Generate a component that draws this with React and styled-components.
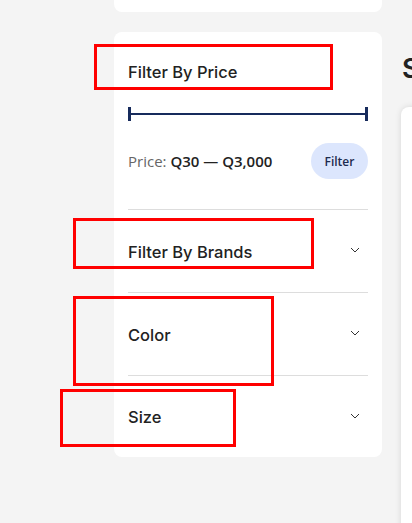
import React from 'react'
import styled, { createGlobalStyle } from 'styled-components';

const GlobalStyle = createGlobalStyle`
    html, body {
        margin: 0;
        padding: 0;
        background: #f4f4f4;
        overflow: hidden;
    }
    body {
        font-family: "Open Sans", "Noto Sans", sans-serif;
    }
`

const Page = styled.div`
    position: relative;
    width: 412px;
    height: 523px;
    overflow: hidden;
    display: grid;
    grid-template-columns: 268px 300px;
    column-gap: 19px;
    padding-left: 114px;
    box-sizing: border-box;
`

const SideColumn = styled.div`
    display: flex;
    flex-direction: column;
    gap: 20px;
`

const TopCard = styled.div`
    height: 12px;
    background: #fff;
    border-radius: 0 0 8px 8px;
`

const FilterCard = styled.div`
    background: #fff;
    border-radius: 8px;
    padding: 0 14px;
`

const PriceSection = styled.div`
    padding: 30px 0 30px;
`

const Heading = styled.h3`
    margin: 0;
    font-family: "Inter", "Lato", sans-serif;
    font-weight: 500;
    font-size: 16.5px;
    line-height: 20px;
    color: #222;
`

const Slider = styled.div`
    position: relative;
    height: 14px;
    margin-top: 25px;
    &::before {
        content: "";
        position: absolute;
        left: 0;
        right: 0;
        top: 6px;
        height: 2px;
        background: #172b5c;
    }
`

const Handle = styled.span`
    position: absolute;
    top: 0;
    ${p => p.side}: 0;
    width: 3px;
    height: 14px;
    background: #172b5c;
`

const PriceRow = styled.div`
    margin-top: 22px;
    display: flex;
    align-items: center;
    justify-content: space-between;
`

const PriceLabel = styled.span`
    font-size: 15px;
    color: #666;
    b {
        font-weight: 600;
        color: #222;
    }
`

const FilterButton = styled.button`
    width: 57px;
    height: 36px;
    border: none;
    border-radius: 18px;
    background: #dce6fd;
    font-family: "Open Sans", sans-serif;
    font-weight: 600;
    font-size: 12px;
    color: #1d2b4f;
    padding: 0;
`

const AccordionRow = styled.div`
    height: 81px;
    padding-top: 1px;
    border-top: 1px solid #dddddd;
    display: flex;
    align-items: center;
    justify-content: space-between;
    &:last-child {
        height: 80px;
    }
`

const Chevron = styled.svg`
    margin-right: 8px;
    margin-top: -3px;
`

const MainColumn = styled.div`
    padding-top: 53px;
`

const MainTitle = styled.h2`
    margin: 0 0 0 1px;
    font-family: "Inter", "Lato", sans-serif;
    font-weight: 600;
    font-size: 27px;
    line-height: 32px;
    color: #222;
`

const MainCard = styled.div`
    margin-top: 22px;
    height: 460px;
    background: #fff;
    border-radius: 8px;
    box-shadow: 0 0 6px rgba(0, 0, 0, 0.12);
`

const Marker = styled.div`
    position: absolute;
    border: 3px solid #ff0000;
    box-sizing: border-box;
    pointer-events: none;
`

const ChevronIcon = () => (
    <Chevron width="10" height="6" viewBox="0 0 10 6">
        <path d="M1 1l4 4 4-4" fill="none" stroke="#333" strokeWidth="1" />
    </Chevron>
)

const markers = [
    { left: 94, top: 44, width: 239, height: 46 },
    { left: 73, top: 218, width: 241, height: 51 },
    { left: 73, top: 296, width: 201, height: 90 },
    { left: 60, top: 389, width: 176, height: 58 },
]

export default function App() {
    return (
        <>
            <GlobalStyle />
            <Page>
                <SideColumn>
                    <TopCard />
                    <FilterCard>
                        <PriceSection>
                            <Heading>Filter By Price</Heading>
                            <Slider>
                                <Handle side="left" />
                                <Handle side="right" />
                            </Slider>
                            <PriceRow>
                                <PriceLabel>Price: <b>Q30 — Q3,000</b></PriceLabel>
                                <FilterButton>Filter</FilterButton>
                            </PriceRow>
                        </PriceSection>
                        {['Filter By Brands', 'Color', 'Size'].map(title => (
                            <AccordionRow key={title}>
                                <Heading>{title}</Heading>
                                <ChevronIcon />
                            </AccordionRow>
                        ))}
                    </FilterCard>
                </SideColumn>
                <MainColumn>
                    <MainTitle>Shop</MainTitle>
                    <MainCard />
                </MainColumn>
                {markers.map((m, i) => (
                    <Marker key={i} style={m} />
                ))}
            </Page>
        </>
    )
}
